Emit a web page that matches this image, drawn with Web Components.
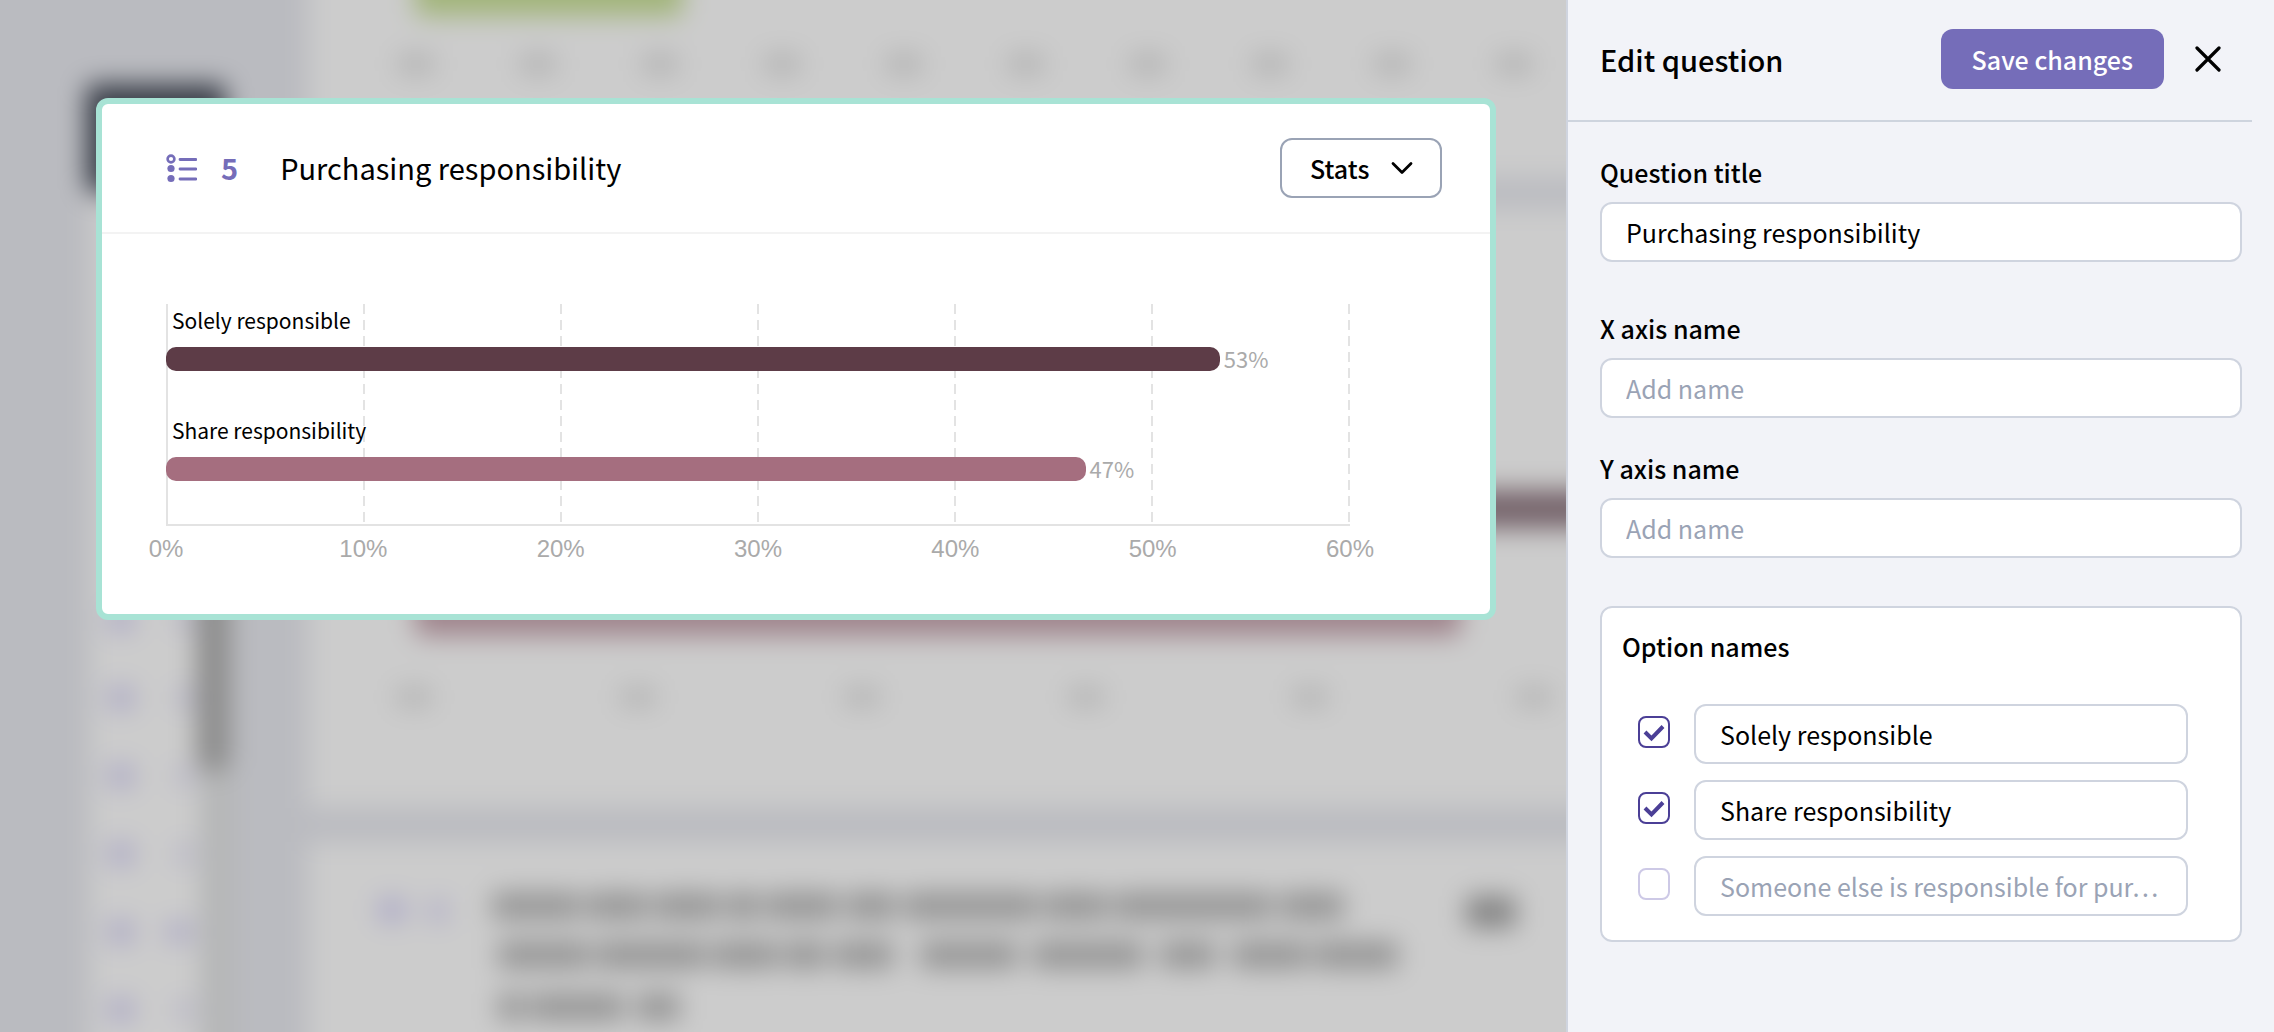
<!DOCTYPE html>
<html lang="en">
<head>
<meta charset="utf-8">
<title>Edit question</title>
<style>
  html, body { margin: 0; min-height: 100%; }
  body {
    font-family: "Noto Sans CJK KR", "Noto Sans", sans-serif;
    font-size: 25px; line-height: 32px; color: #000;
    --line: #cfd4df; --muted: #9aa3b5; --violet: #756db9; --indigo: #4b3f96; --mint: #a8e3d5;
  }
</style>
</head>
<body>
<question-editor></question-editor>
<script>
const define = (name, html, setup) => {
  const template = document.createElement('template');
  template.innerHTML = html;
  customElements.define(name, class extends HTMLElement {
    constructor() {
      super();
      this.attachShadow({ mode: 'open' }).append(template.content.cloneNode(true));
    }
    connectedCallback() {
      if (setup && !this.ready) { this.ready = true; setup(this, this.shadowRoot); }
    }
  });
};

/* Survey results behind the dialog, out of focus */
define('blurred-results', `
<style>
  :host { display: block; overflow: hidden; background: #babbc0; }
  svg { display: block; width: 100%; height: 100%; }
</style>
<svg viewBox="0 0 1566 1032" preserveAspectRatio="xMinYMin slice" aria-hidden="true">
  <defs>
    <filter id="soft" filterUnits="userSpaceOnUse" x="-100" y="-100" width="1800" height="1300" color-interpolation-filters="sRGB"><feGaussianBlur stdDeviation="13"/></filter>
  </defs>
  <g filter="url(#soft)">
    <rect x="-100" y="-100" width="1800" height="1300" fill="#babbc0"/>
    <g fill="#cccccc">
      <rect x="308" y="-120" width="1500" height="298"/>
      <rect x="308" y="208" width="1500" height="600"/>
      <rect x="308" y="842" width="1500" height="400"/>
      <rect x="90" y="200" width="112" height="1000"/>
    </g>
    <rect x="200" y="200" width="34" height="1000" fill="#b5b6b7"/>
    <rect x="196" y="500" width="34" height="272" rx="14" fill="#8c8c8c"/>
    <rect x="86" y="84" width="140" height="108" rx="8" fill="#3a3f49"/>
    <rect x="415" y="-60" width="268" height="76" rx="8" fill="#a2b57a"/>
    <rect x="415" y="490" width="1300" height="38" rx="8" fill="#75636a"/>
    <rect x="415" y="590" width="1046" height="46" rx="8" fill="#a0858d"/>
    <g id="marks"></g>
  </g>
</svg>`, (host, root) => {
  const marks = root.getElementById('marks');
  const put = (x, y, w, h, fill) => {
    const r = document.createElementNS('http://www.w3.org/2000/svg', 'rect');
    for (const [k, v] of Object.entries({ x, y, width: w, height: h, fill, rx: 4 })) r.setAttribute(k, v);
    marks.append(r);
  };
  for (let i = 0; i < 10; i++) put(398 + i * 122, 54, 36, 20, '#b3b3b3');
  for (let i = 0; i < 6; i++) put(396 + i * 224, 687, 36, 20, '#b5b5b5');
  for (let i = 0; i < 6; i++) {
    put(108, 608 + i * 78, 26, 24, '#aeabc6');
    put(i === 4 ? 166 : 178, 610 + i * 78, i === 4 ? 26 : 12, 20, '#aeabc6');
  }
  put(378, 898, 28, 24, '#aeabc8');
  put(428, 900, 20, 22, '#b2afc8');
  const words = (y, list) => list.forEach(([x, w]) => put(x, y, w, 28, '#969696'));
  words(892, [[492, 88], [586, 62], [654, 66], [726, 34], [766, 72], [846, 50], [904, 134], [1044, 64], [1114, 158], [1280, 64]]);
  words(941, [[498, 92], [596, 110], [712, 66], [784, 42], [834, 60], [920, 98], [1032, 112], [1160, 56], [1232, 76], [1314, 84]]);
  words(993, [[498, 26], [530, 94], [636, 44]]);
  put(1466, 896, 50, 32, '#858585');
});

/* Horizontal bar chart on a percentage axis */
define('bar-chart', `
<style>
  :host { display: block; }
  .plot { display: grid; border-bottom: 2px solid #e3e3e3; }
  .plot > * { grid-area: 1 / 1; }
  .grid { display: flex; border-left: 2px solid #e3e3e3; }
  .grid i { flex: 1; background: repeating-linear-gradient(#e3e3e3 0 10px, transparent 10px 16px) right / 2px 100% no-repeat; }
  .name { height: 43px; line-height: 32px; padding-left: 6px; font-size: 21px; }
  .row { height: 110px; }
  .line { display: flex; align-items: center; gap: 4px; height: 24px; }
  .bar { height: 24px; border-radius: 10px; }
  .value { padding-bottom: 2px; font-size: 22px; color: #aaa; }
  .ticks { display: flex; justify-content: space-between; height: 50px; line-height: 46px; font-family: "Liberation Sans", sans-serif; font-size: 24px; color: #aaa; }
  .ticks span { width: 0; display: flex; justify-content: center; }
</style>
<div class="plot"><div class="grid"></div><div class="rows"></div></div>
<div class="ticks"></div>`, (host, root) => {
  const max = 60;
  for (let t = 0; t <= max; t += 10) {
    if (t) root.querySelector('.grid').append(document.createElement('i'));
    const s = document.createElement('span');
    s.textContent = t + '%';
    root.querySelector('.ticks').append(s);
  }
  const data = [
    { name: 'Solely responsible', value: 53.4, color: '#5d3c47' },
    { name: 'Share responsibility', value: 46.6, color: '#a56e7f' }
  ];
  for (const d of data) {
    const row = document.createElement('div');
    row.className = 'row';
    row.innerHTML = '<div class="name"></div><div class="line"><div class="bar"></div><span class="value"></span></div>';
    row.querySelector('.name').textContent = d.name;
    row.querySelector('.bar').style.cssText = `width:${d.value / max * 100}%;background:${d.color}`;
    row.querySelector('.value').textContent = Math.round(d.value) + '%';
    root.querySelector('.rows').append(row);
  }
});

define('question-card', `
<style>
  :host { display: block; box-sizing: border-box; background: #fff; border: 6px solid var(--mint); border-radius: 12px; }
  header { display: flex; align-items: center; height: 128px; padding: 0 48px 0 64px; border-bottom: 2px solid #f3f3f3; }
  svg { display: block; }
  .number, h1 { padding-bottom: 2px; font-size: 29px; line-height: 40px; }
  .number { margin-left: 24px; font-weight: 700; color: var(--violet); }
  h1 { flex: 1; margin: 0 0 0 42px; font-weight: 400; }
  .select { display: grid; align-items: center; }
  .select > * { grid-area: 1 / 1; }
  select { appearance: none; box-sizing: border-box; width: 162px; height: 60px; margin: 0; padding: 0 28px; border: 2px solid var(--muted); border-radius: 12px; background: #fff; color: #000; font: 500 25px/32px "Noto Sans CJK KR", sans-serif; }
  .select svg { justify-self: end; margin-right: 29px; pointer-events: none; }
  .body { padding: 70px 140px 38px 64px; }
</style>
<header>
  <svg width="31" height="30" viewBox="0 0 31 30" fill="none" stroke="#756db9" aria-hidden="true">
    <circle cx="5" cy="6" r="3.4" stroke-width="2.6"/>
    <g fill="#756db9" stroke="none"><circle cx="5" cy="15.500" r="3.6"/><circle cx="5" cy="25.500" r="3.6"/></g>
    <path d="M14 6.500h16M14 16h16M14 26h16" stroke-width="2.800" stroke-linecap="round"/>
  </svg>
  <span class="number">5</span>
  <h1>Purchasing responsibility</h1>
  <div class="select">
    <select aria-label="View"><option>Stats</option></select>
    <svg width="22" height="14" viewBox="0 0 22 14" fill="none" stroke="#000" stroke-width="2.800" stroke-linecap="round" stroke-linejoin="round"><path d="M2 2.500l9 9 9-9"/></svg>
  </div>
</header>
<div class="body"><bar-chart></bar-chart></div>`);

const fieldCss = `
  input[type=text] { display: block; box-sizing: border-box; width: 100%; height: 60px; margin: 0; padding: 0 24px; border: 2px solid var(--line); border-radius: 12px; background: #fff; color: #000; font: 400 25px/32px "Noto Sans CJK KR", sans-serif; text-overflow: ellipsis; }
  input[type=text]::placeholder { color: var(--muted); opacity: 1; }`;

define('text-field', `
<style>
  :host { display: block; }
  label { display: block; margin-bottom: 12px; line-height: 36px; font-weight: 500; }
  ${fieldCss}
</style>
<label for="field"></label><input type="text" id="field">`, (host, root) => {
  root.querySelector('label').textContent = host.getAttribute('label');
  const input = root.querySelector('input');
  input.value = host.getAttribute('value') || '';
  input.placeholder = host.getAttribute('placeholder') || '';
});

define('option-row', `
<style>
  :host { display: flex; align-items: flex-start; gap: 24px; }
  ${fieldCss}
  input[type=text] { flex: 1; min-width: 0; }
  .tick { display: grid; margin-top: 12px; }
  .tick > * { grid-area: 1 / 1; }
  input[type=checkbox] { appearance: none; box-sizing: border-box; width: 32px; height: 32px; margin: 0; border: 2px solid #cdc9e6; border-radius: 8px; background: #fff; }
  input[type=checkbox]:checked { border-color: var(--indigo); }
  svg { display: none; pointer-events: none; }
  input:checked + svg { display: block; }
</style>
<div class="tick">
  <input type="checkbox" id="use">
  <svg width="32" height="32" viewBox="0 0 32 32" fill="none" stroke="#4b3f96" stroke-width="4"><path d="M7 16l6.500 6.500L25 10.500"/></svg>
</div>
<input type="text">`, (host, root) => {
  const box = root.querySelector('#use'), input = root.querySelector('input[type=text]');
  box.checked = host.hasAttribute('checked');
  const name = host.getAttribute('name');
  box.setAttribute('aria-label', 'Show ' + name);
  input.setAttribute('aria-label', 'Option name');
  if (box.checked) input.value = name; else input.placeholder = name;
});

define('edit-panel', `
<style>
  :host { display: block; box-sizing: border-box; background: #f2f3f8; border-left: 2px solid var(--line); }
  header { display: flex; align-items: center; height: 118px; margin-right: 22px; padding: 0 20px 2px 32px; border-bottom: 2px solid #ced4de; }
  h2 { flex: 1; margin: 0; font-size: 29px; line-height: 40px; font-weight: 500; }
  button { font: 500 25px/32px "Noto Sans CJK KR", sans-serif; border: 0; margin: 0; padding: 0; }
  .save { height: 60px; padding: 0 31px; border-radius: 12px; background: var(--violet); color: #fff; }
  .close { display: grid; place-items: center; width: 48px; height: 48px; margin-left: 20px; background: none; }
  form { display: flex; flex-direction: column; padding: 32px 32px 0; }
  text-field + text-field { margin-top: 32px; }
  .title + text-field { margin-top: 48px; }
  fieldset { min-width: 0; margin: 48px 0 0; padding: 20px 52px 24px 20px; border: 2px solid var(--line); border-radius: 12px; background: #fff; }
  h3 { margin: 0 0 40px; font-size: 25px; line-height: 36px; font-weight: 500; }
  .options { display: flex; flex-direction: column; gap: 16px; padding-left: 16px; }
</style>
<header>
  <h2>Edit question</h2>
  <button class="save">Save changes</button>
  <button class="close" aria-label="Close"><svg width="26" height="26" viewBox="0 0 26 26" fill="none" stroke="#000" stroke-width="3.200" stroke-linecap="round"><path d="M2 2l22 22M24 2L2 24"/></svg></button>
</header>
<form>
  <text-field class="title" label="Question title" value="Purchasing responsibility"></text-field>
  <text-field label="X axis name" placeholder="Add name"></text-field>
  <text-field label="Y axis name" placeholder="Add name"></text-field>
  <fieldset aria-labelledby="options">
    <h3 id="options">Option names</h3>
    <div class="options">
      <option-row name="Solely responsible" checked></option-row>
      <option-row name="Share responsibility" checked></option-row>
      <option-row name="Someone else is responsible for pur…"></option-row>
    </div>
  </fieldset>
</form>`);

define('question-editor', `
<style>
  :host { display: grid; grid-template-columns: minmax(0, 1fr) 708px; min-height: 100vh; }
  main { display: grid; min-width: 0; }
  main > * { grid-area: 1 / 1; min-width: 0; }
  question-card { z-index: 1; align-self: start; margin: 98px 70px 0 96px; }
</style>
<main><blurred-results></blurred-results><question-card></question-card></main>
<edit-panel></edit-panel>`);
</script>
</body>
</html>
